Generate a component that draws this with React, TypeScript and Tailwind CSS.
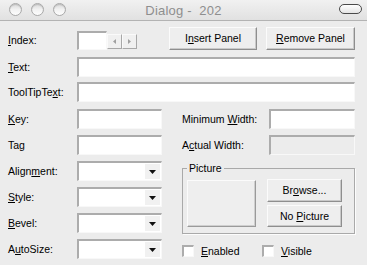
import React from 'react';

// Sunken 3D edge (text boxes, combos, checkboxes)
const sunken =
  'border-t-2 border-l-2 border-b border-r border-t-[#acacac] border-l-[#acacac] border-b-[#f8f8f8] border-r-[#f8f8f8]';

// Raised 3D edge (push buttons)
const raised =
  'bg-[#eeeeee] border border-t-[#fbfbfb] border-l-[#fbfbfb] border-r-[#8e8e8e] border-b-[#8e8e8e] shadow-[inset_-1px_-1px_0_#c9c9c9]';

const U: React.FC<{ children: React.ReactNode }> = ({ children }) => (
  <span className="underline underline-offset-[1px] decoration-1">{children}</span>
);

const Label: React.FC<{ w: string; children: React.ReactNode }> = ({ w, children }) => (
  <div className={`${w} shrink-0 whitespace-nowrap`}>{children}</div>
);

const TextBox: React.FC<{ className?: string; disabled?: boolean }> = ({ className = '', disabled }) => (
  <div className={`${sunken} h-[20px] ${disabled ? 'bg-[#ececec]' : 'bg-white'} ${className}`} />
);

const Combo: React.FC = () => (
  <div className={`${sunken} h-[20px] w-[85px] bg-white flex justify-end items-stretch p-[1px]`}>
    <div className="w-[15px] flex items-center justify-center bg-[#f1f1f1]">
      <svg width="7" height="4" viewBox="0 0 7 4">
        <polygon points="0,0 7,0 3.5,4" fill="#111" />
      </svg>
    </div>
  </div>
);

const Button: React.FC<{ className?: string; children: React.ReactNode }> = ({ className = '', children }) => (
  <div className={`${raised} flex items-center justify-center whitespace-nowrap ${className}`}>
    <span>{children}</span>
  </div>
);

const SpinButton: React.FC<{ dir: 'left' | 'right' }> = ({ dir }) => (
  <div className="w-[15px] h-[15px] flex items-center justify-center bg-[#f0f0f0] border-r border-b border-r-[#a8a8a8] border-b-[#a8a8a8] border-t border-l border-t-[#fafafa] border-l-[#fafafa]">
    <svg width="3" height="5" viewBox="0 0 3 5">
      {dir === 'left' ? (
        <polygon points="3,0 3,5 0,2.5" fill="#a0a0a0" />
      ) : (
        <polygon points="0,0 0,5 3,2.5" fill="#a0a0a0" />
      )}
    </svg>
  </div>
);

const Light: React.FC = () => (
  <div className="w-[13px] h-[13px] rounded-full border border-[#a9a9a9] bg-gradient-to-b from-[#d9d9d9] via-[#f2f2f2] to-[#fdfdfd] shadow-[inset_0_1px_1px_rgba(0,0,0,0.15)]" />
);

const CheckBox: React.FC<{ children: React.ReactNode }> = ({ children }) => (
  <div className="flex items-center">
    <div className={`${sunken} w-[12px] h-[12px] bg-white`} />
    <span className="ml-[7px]">{children}</span>
  </div>
);

export default function App() {
  return (
    <div className="w-[367px] h-[265px] overflow-hidden bg-[#ececec] text-black text-[10.5px] leading-[13px] font-['Liberation_Sans',Arial,sans-serif]">
      {/* title bar */}
      <div className="h-[21px] grid grid-cols-[1fr_auto_1fr] items-center bg-gradient-to-b from-[#f1f1f1] to-[#e1e1e1] border-b border-[#b3b3b3]">
        <div className="flex gap-[9px] pl-[9px] -mt-[1px]">
          <Light />
          <Light />
          <Light />
        </div>
        <div className="text-[13px] text-[#8e8e8e] whitespace-pre tracking-[0.2px]">Dialog -  202</div>
        <div className="flex justify-end pr-[5px] -mt-[2px]">
          <div className="w-[23px] h-[10px] rounded-full border border-[#4a4a4a] bg-gradient-to-b from-white to-[#e4e4e4]" />
        </div>
      </div>

      {/* body */}
      <div className="pl-[8px] pr-[12px]">
        {/* index row */}
        <div className="mt-[6px] h-[23px] flex items-end">
          <Label w="w-[69px]">
            <div className="h-[19px] flex items-center">
              <span>
                <U>I</U>ndex:
              </span>
            </div>
          </Label>
          <div className={`${sunken} w-[30px] h-[19px] bg-white`} />
          <div className="flex self-end mb-[1px]">
            <SpinButton dir="left" />
            <SpinButton dir="right" />
          </div>
          <div className="ml-auto flex gap-[9px]">
            <Button className="w-[88px] h-[23px]">
              I<U>n</U>sert Panel
            </Button>
            <Button className="w-[89px] h-[23px]">
              <U>R</U>emove Panel
            </Button>
          </div>
        </div>

        {/* text */}
        <div className="mt-[7px] h-[20px] flex items-center">
          <Label w="w-[69px]">
            <U>T</U>ext:
          </Label>
          <TextBox className="flex-1" />
        </div>

        {/* tooltip */}
        <div className="mt-[5px] h-[20px] flex items-center">
          <Label w="w-[69px]">
            ToolTipTe<U>x</U>t:
          </Label>
          <TextBox className="flex-1" />
        </div>

        {/* lower two columns */}
        <div className="mt-[7px] flex">
          <div className="w-[154px] flex flex-col gap-[6px]">
            <div className="h-[20px] flex items-center">
              <Label w="w-[69px]">
                <U>K</U>ey:
              </Label>
              <TextBox className="w-[85px]" />
            </div>
            <div className="h-[20px] flex items-center">
              <Label w="w-[69px]">Tag</Label>
              <TextBox className="w-[85px]" />
            </div>
            <div className="h-[20px] flex items-center">
              <Label w="w-[69px]">
                Align<U>m</U>ent:
              </Label>
              <Combo />
            </div>
            <div className="h-[20px] flex items-center">
              <Label w="w-[69px]">
                <U>S</U>tyle:
              </Label>
              <Combo />
            </div>
            <div className="h-[20px] flex items-center">
              <Label w="w-[69px]">
                <U>B</U>evel:
              </Label>
              <Combo />
            </div>
            <div className="h-[20px] flex items-center">
              <Label w="w-[69px]">
                A<U>u</U>toSize:
              </Label>
              <Combo />
            </div>
          </div>

          <div className="ml-[20px] w-[173px] flex flex-col">
            <div className="h-[20px] flex items-center">
              <Label w="w-[87px]">
                Minimum <U>W</U>idth:
              </Label>
              <TextBox className="w-[86px]" />
            </div>
            <div className="mt-[6px] h-[20px] flex items-center">
              <Label w="w-[87px]">
                A<U>c</U>tual Width:
              </Label>
              <TextBox className="w-[86px]" disabled />
            </div>

            <fieldset className="mt-[7px] border border-[#a9a9a9] shadow-[1px_1px_0_#fcfcfc] pl-[4px] pr-[12px] pt-[4px] pb-[6px]">
              <legend className="px-[2px]">Picture</legend>
              <div className="flex items-end">
                <div className="w-[69px] h-[47px] bg-[#eeeeee] border border-t-[#fbfbfb] border-l-[#fbfbfb] border-r-[#9a9a9a] border-b-[#9a9a9a] shadow-[inset_-1px_-1px_0_#cfcfcf]" />
                <div className="ml-auto flex flex-col gap-[3px] w-[75px]">
                  <Button className="h-[23px]">
                    Br<U>o</U>wse...
                  </Button>
                  <Button className="h-[22px]">
                    No <U>P</U>icture
                  </Button>
                </div>
              </div>
            </fieldset>

            <div className="mt-[10px] h-[14px] flex items-center">
              <div className="w-[80px]">
                <CheckBox>
                  <U>E</U>nabled
                </CheckBox>
              </div>
              <CheckBox>
                <U>V</U>isible
              </CheckBox>
            </div>
          </div>
        </div>
      </div>
    </div>
  );
}
